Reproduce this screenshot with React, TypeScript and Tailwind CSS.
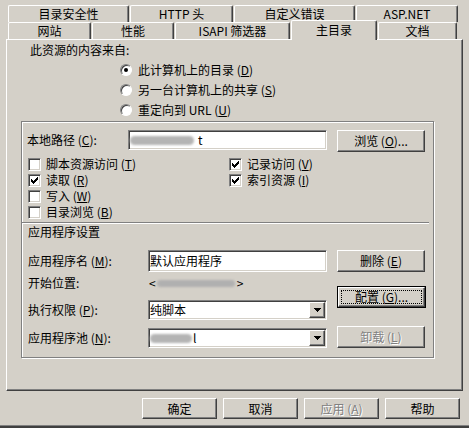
import React from "react";

const raised =
  "border border-t-white border-l-white border-r-[#404040] border-b-[#404040] shadow-[inset_-1px_-1px_#808080] bg-[#d4d0c8]";
const sunken =
  "border border-t-[#808080] border-l-[#808080] border-r-white border-b-white shadow-[inset_1px_1px_#404040,inset_-1px_-1px_#d4d0c8]";

function M({ c }: { c: string }) {
  return (
    <>
      (<u>{c}</u>)
    </>
  );
}

function Tab({ w, children }: { w: string; children: React.ReactNode }) {
  return (
    <div
      className={`${w} h-[17px] border-l border-t border-r border-l-white border-t-white border-r-[#404040] shadow-[inset_-1px_0_#808080] rounded-t-[2px] flex justify-center pt-[1px] whitespace-nowrap`}
    >
      {children}
    </div>
  );
}

function Radio({ on }: { on?: boolean }) {
  return (
    <div className="w-[12px] h-[12px] rounded-full bg-white border border-t-[#808080] border-l-[#808080] border-r-white border-b-white shadow-[inset_1px_1px_#404040] flex items-center justify-center shrink-0">
      {on && <div className="w-[4px] h-[4px] rounded-full bg-black" />}
    </div>
  );
}

function Check({ on }: { on?: boolean }) {
  return (
    <div className={`relative w-[13px] h-[13px] bg-white shrink-0 ${sunken}`}>
      {on && (
        <svg
          className="absolute left-[2px] top-[2px]"
          width="7"
          height="7"
          viewBox="0 0 7 7"
          shapeRendering="crispEdges"
        >
          <path
            d="M6 0h1v1h-1z M5 1h2v1h-2z M0 2h1v1h-1z M4 2h3v1h-3z M0 3h2v1h-2z M3 3h3v1h-3z M0 4h5v1h-5z M1 5h3v1h-3z M2 6h1v1h-1z"
            fill="#000"
          />
        </svg>
      )}
    </div>
  );
}

function CheckRow({ on, children }: { on?: boolean; children: React.ReactNode }) {
  return (
    <div className="h-[16px] flex items-center gap-[5px] whitespace-nowrap">
      <Check on={on} />
      <span>{children}</span>
    </div>
  );
}

function Btn({
  w,
  h,
  disabled,
  children,
}: {
  w: string;
  h: string;
  disabled?: boolean;
  children: React.ReactNode;
}) {
  return (
    <div
      className={`${w} ${h} ${raised} flex items-center justify-center whitespace-nowrap ${
        disabled ? "text-[#808080] [text-shadow:1px_1px_0_#ffffff]" : ""
      }`}
    >
      {children}
    </div>
  );
}

function Select({ children }: { children: React.ReactNode }) {
  return (
    <div className={`w-[179px] h-[20px] bg-white ${sunken} flex items-center pl-[1px] pr-[1px]`}>
      <div className="flex-1 flex items-center whitespace-nowrap">{children}</div>
      <div className={`w-[16px] h-[16px] ${raised} flex items-center justify-center shrink-0`}>
        <svg width="7" height="4" viewBox="0 0 7 4" shapeRendering="crispEdges">
          <path d="M0 0h7v1h-7z M1 1h5v1h-5z M2 2h3v1h-3z M3 3h1v1h-1z" fill="#000" />
        </svg>
      </div>
    </div>
  );
}

export default function App() {
  return (
    <div className="relative w-[469px] h-[428px] bg-[#d4d0c8] overflow-hidden text-[12px] leading-[14px] text-black font-['Noto_Sans_CJK_SC','Liberation_Sans',sans-serif] border-b-2 border-[#404040] shadow-[inset_0_-1px_#808080] flex flex-col">
      {/* back tab row */}
      <div className="mt-[5px] pl-[8px] flex gap-[1px] h-[17px]">
        <Tab w="w-[121px]">目录安全性</Tab>
        <Tab w="w-[103px]">HTTP 头</Tab>
        <Tab w="w-[121px]">自定义错误</Tab>
        <Tab w="w-[102px]">ASP.NET</Tab>
      </div>
      {/* front tab row */}
      <div className="pl-[8px] flex items-end gap-[1px] h-[17px]">
        <Tab w="w-[83px]">网站</Tab>
        <Tab w="w-[82px]">性能</Tab>
        <Tab w="w-[115px]">ISAPI 筛选器</Tab>
        <div className="relative z-10 w-[86px] h-[20px] -mb-[1px] bg-[#d4d0c8] border-l border-t border-r border-l-white border-t-white border-r-[#404040] shadow-[inset_-1px_0_#808080] rounded-t-[2px] flex justify-center pt-[2px]">
          主目录
        </div>
        <Tab w="w-[79px]">文档</Tab>
      </div>

      {/* panel */}
      <div className="mx-[6px] h-[352px] border border-t-white border-l-white border-r-[#404040] border-b-[#404040] shadow-[inset_-1px_-1px_#808080] flex flex-col">
        <div className="mt-[3px] pl-[23px] h-[14px]">此资源的内容来自:</div>
        <div className="mt-[3px] pl-[113px] flex flex-col">
          <div className="h-[20px] flex items-center gap-[6px]">
            <Radio on />
            <span>
              此计算机上的目录 <M c="D" />
            </span>
          </div>
          <div className="h-[20px] flex items-center gap-[6px]">
            <Radio />
            <span>
              另一台计算机上的共享 <M c="S" />
            </span>
          </div>
          <div className="h-[20px] flex items-center gap-[6px]">
            <Radio />
            <span>
              重定向到 URL <M c="U" />
            </span>
          </div>
        </div>

        {/* group box */}
        <div className="mt-[1px] ml-[14px] w-[413px] h-[237px] border border-[#808080] shadow-[inset_1px_1px_#ffffff,1px_1px_#ffffff] flex flex-col">
          <div className="mt-[8px] flex items-start">
            <div className="w-[106px] pl-[5px] h-[20px] flex items-center whitespace-nowrap">
              本地路径 <M c="C" />:
            </div>
            <div className={`w-[199px] h-[20px] bg-white ${sunken} flex items-center pl-[1px]`}>
              <span className="w-[64px] h-[9px] rounded-full bg-[#b4b4b4] blur-[1px]" />
              <span className="ml-[4px]">t</span>
            </div>
            <div className="ml-[10px]">
              <Btn w="w-[88px]" h="h-[22px]">
                浏览 <M c="O" />...
              </Btn>
            </div>
          </div>

          <div className="mt-[4px] pl-[6px] grid grid-cols-[201px_auto]">
            <CheckRow>
              脚本资源访问 <M c="T" />
            </CheckRow>
            <CheckRow on>
              记录访问 <M c="V" />
            </CheckRow>
            <CheckRow on>
              读取 <M c="R" />
            </CheckRow>
            <CheckRow on>
              索引资源 <M c="I" />
            </CheckRow>
            <CheckRow>
              写入 <M c="W" />
            </CheckRow>
            <div />
            <CheckRow>
              目录浏览 <M c="B" />
            </CheckRow>
            <div />
          </div>

          <div className="mt-[2px] w-[407px] h-[2px] border-t border-t-[#808080] border-b border-b-white" />
          <div className="mt-[1px] pl-[6px] h-[14px]">应用程序设置</div>

          <div className="mt-[11px] flex">
            <div className="pl-[6px] flex flex-col">
              <div className="h-[22px] flex items-center">
                <div className="w-[120px] whitespace-nowrap">
                  应用程序名 <M c="M" />:
                </div>
                <div className={`w-[179px] h-[22px] bg-white ${sunken} flex items-center pl-[1px]`}>
                  默认应用程序
                </div>
              </div>
              <div className="h-[22px] flex items-center">
                <div className="w-[121px] whitespace-nowrap">开始位置:</div>
                <span>&lt;</span>
                <span className="ml-[1px] w-[78px] h-[7px] rounded-full bg-[#b0b0b0] blur-[1px]" />
                <span className="ml-[2px]">&gt;</span>
              </div>
              <div className="mt-[6px] h-[20px] flex items-center">
                <div className="w-[120px] whitespace-nowrap">
                  执行权限 <M c="P" />:
                </div>
                <Select>纯脚本</Select>
              </div>
              <div className="mt-[8px] h-[20px] flex items-center">
                <div className="w-[120px] whitespace-nowrap">
                  应用程序池 <M c="N" />:
                </div>
                <Select>
                  <span className="w-[42px] h-[9px] rounded-full bg-[#b4b4b4] blur-[1px]" />
                  <span className="ml-[1px]">l</span>
                </Select>
              </div>
            </div>
            <div className="ml-[10px] flex flex-col">
              <Btn w="w-[88px]" h="h-[22px]">
                删除 <M c="E" />
              </Btn>
              <div className="mt-[14px] w-[89px] h-[22px] border border-black flex">
                <div className={`relative flex-1 ${raised} flex items-center justify-center whitespace-nowrap`}>
                  <span className="absolute inset-[2px] border border-dotted border-black" />
                  <span>
                    配置 <M c="G" />...
                  </span>
                </div>
              </div>
              <div className="mt-[18px]">
                <Btn w="w-[88px]" h="h-[22px]" disabled>
                  卸载 <M c="L" />
                </Btn>
              </div>
            </div>
          </div>
        </div>
      </div>

      {/* bottom buttons */}
      <div className="mt-[7px] flex justify-end gap-[6px] pr-[9px]">
        <Btn w="w-[75px]" h="h-[21px]">确定</Btn>
        <Btn w="w-[75px]" h="h-[21px]">取消</Btn>
        <Btn w="w-[75px]" h="h-[21px]" disabled>
          应用 <M c="A" />
        </Btn>
        <Btn w="w-[75px]" h="h-[21px]">帮助</Btn>
      </div>
    </div>
  );
}
